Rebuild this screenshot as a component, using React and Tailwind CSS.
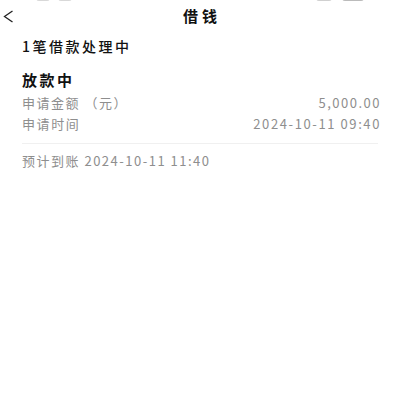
export default function App() {
  const font = { fontFamily: '"Noto Sans CJK SC", "Noto Sans", sans-serif' };
  return (
    <div className="w-[400px] h-[406px] bg-white overflow-hidden relative" style={font}>
      <div className="h-[4px] flex justify-between px-[36px]">
        <div className="flex gap-[8px] mt-[-2px]">
          <div className="w-[14px] h-[3px] bg-[#d8d8d8] rounded-b"></div>
          <div className="w-[14px] h-[3px] bg-[#d8d8d8] rounded-b"></div>
        </div>
        <div className="flex gap-[10px] mt-[-2px]">
          <div className="w-[16px] h-[3px] bg-[#d0d0d0] rounded-b"></div>
          <div className="w-[22px] h-[3px] bg-[#bbbbbb] rounded-b"></div>
        </div>
      </div>
      <div className="h-[24px] flex items-center relative">
        <svg className="absolute left-[3px] top-[6px]" width="11" height="13" viewBox="0 0 11 13">
          <polyline points="9.5,1 1.5,6.5 9.5,12" fill="none" stroke="#222" strokeWidth="1.3" />
        </svg>
        <div className="w-full text-center text-[15px] font-bold text-[#111] leading-[24px] tracking-[4px] pl-[4px]">借钱</div>
      </div>
      <div className="px-[22px]">
        <div className="mt-[9px] text-[14px] font-medium text-[#111] leading-[18px] tracking-[2.5px]">1笔借款处理中</div>
        <div className="mt-[15px] text-[15px] font-bold text-[#111] leading-[20px] tracking-[2.5px]">放款中</div>
        <div className="mt-[5px] flex justify-between text-[13px] leading-[16px] text-[#8e8e8e] tracking-[1.5px]">
          <span>申请金额 （元）</span>
          <span className="mr-[-3px]">5,000.00</span>
        </div>
        <div className="mt-[5px] flex justify-between text-[13px] leading-[16px] text-[#8e8e8e] tracking-[1.6px]">
          <span>申请时间</span>
          <span className="mr-[-3px]">2024-10-11 09:40</span>
        </div>
        <div className="mt-[11px] h-px bg-[#f0f0f0]"></div>
        <div className="mt-[9px] text-[13px] leading-[16px] text-[#8e8e8e] tracking-[1.5px]">预计到账 2024-10-11 11:40</div>
      </div>
    </div>
  );
}
